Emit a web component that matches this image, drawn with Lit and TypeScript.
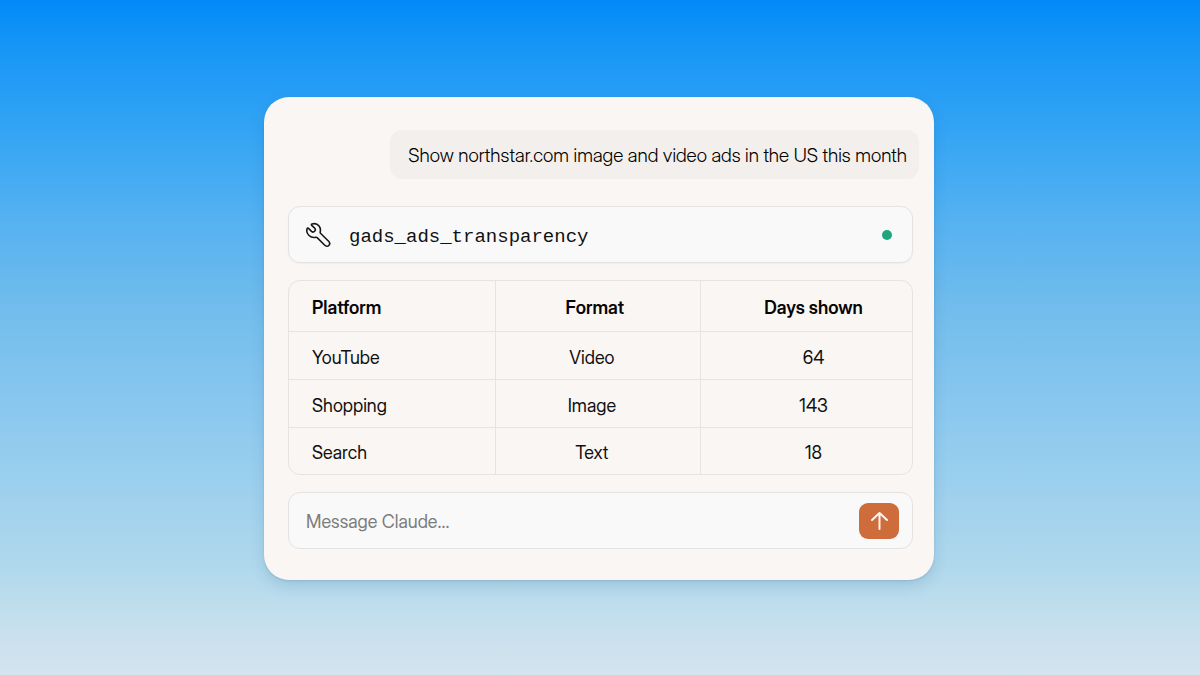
import { LitElement, html, css } from "lit";
import { customElement, state } from "lit/decorators.js";

interface AdRow {
  platform: string;
  format: string;
  days: number;
}

@customElement("app-root")
export class AppRoot extends LitElement {
  static styles = css`
    :host {
      display: grid;
      box-sizing: border-box;
      min-height: 100vh;
      place-items: center;
      padding: 26px 26px 24px 24px;
      font-family: "Inter Display", Inter, "Liberation Sans", sans-serif;
      font-size: 18px;
      line-height: 24px;
      color: #111;
      background: linear-gradient(
        #018af8 0%,
        #1796f6 7%,
        #35a5f4 20%,
        #56b2f1 33%,
        #70bcec 45%,
        #86c6ee 58%,
        #9bcfee 71%,
        #b0d8ec 84%,
        #c9e1ed 94%,
        #d3e4ee 100%
      );
    }
    * {
      box-sizing: border-box;
    }
    .card {
      display: flex;
      flex-direction: column;
      width: 100%;
      max-width: 670px;
      padding: 33px 15px 31px 24px;
      border-radius: 25px;
      background: #faf6f3;
      box-shadow: 0 6px 14px rgba(40, 90, 130, 0.16), 0 1px 2px rgba(40, 90, 130, 0.16);
    }
    .message {
      align-self: flex-end;
      margin: 0 0 27px;
      padding: 14px 12px 11px 18px;
      border-radius: 12px;
      background: #f3efec;
      font-size: 19px;
      font-weight: 300;
      color: #000;
    }
    .stack {
      display: flex;
      flex-direction: column;
      gap: 17px;
      margin-right: 6px;
    }
    .tool,
    .composer {
      display: flex;
      align-items: center;
      min-height: 57px;
      border: 1px solid #e3e3e3;
      border-radius: 12px;
      background: #f9f9f9;
    }
    .tool {
      gap: 18px;
      padding: 0 20px 0 16px;
      box-shadow: 0 1px 2px rgba(0, 0, 0, 0.04);
    }
    .wrench {
      width: 26px;
      height: 26px;
    }
    .name {
      flex: 1;
      padding-top: 4px;
      font-family: "Liberation Mono", monospace;
      font-size: 19px;
    }
    .dot {
      width: 10px;
      height: 10px;
      border-radius: 50%;
      background: #1fa67d;
    }
    .table {
      width: 100%;
      table-layout: fixed;
      border: 1px solid #e6e3e1;
      border-radius: 12px;
      border-collapse: separate;
      border-spacing: 0;
    }
    .table th,
    .table td {
      width: 33%;
      padding: 14px 12px 9px 0;
      text-align: center;
      font-weight: 400;
    }
    .table thead th {
      padding-top: 15px;
      padding-right: 6px;
      padding-bottom: 11px;
      font-weight: 600;
      color: #050505;
    }
    .table tbody tr:last-child td {
      padding-top: 13px;
    }
    .table .platform {
      padding-left: 23px;
      text-align: left;
    }
    .table thead .days,
    .table .days {
      width: 34%;
      padding-right: 0;
      padding-left: 14px;
    }
    .table tr > * + * {
      border-left: 1px solid #e6e3e1;
    }
    .table tbody tr > * {
      border-top: 1px solid #e6e3e1;
    }
    .composer {
      gap: 12px;
      padding: 0 13px 0 17px;
    }
    .input {
      flex: 1;
      min-width: 0;
      padding: 2px 0 0;
      border: 0;
      outline: 0;
      background: none;
      color: inherit;
      font: inherit;
    }
    .input::placeholder {
      color: #7d7d7d;
      opacity: 1;
    }
    .send {
      display: grid;
      place-items: center;
      width: 40px;
      height: 36px;
      padding: 0;
      border: 0;
      border-radius: 9px;
      background: #cf6c3c;
      cursor: pointer;
    }
    .arrow {
      width: 20px;
      height: 20px;
    }
  `;

  @state() private rows: AdRow[] = [
    { platform: "YouTube", format: "Video", days: 64 },
    { platform: "Shopping", format: "Image", days: 143 },
    { platform: "Search", format: "Text", days: 18 },
  ];

  render() {
    return html`
      <main class="card">
        <p class="message">Show northstar.com image and video ads in the US this month</p>
        <div class="stack">
          <div class="tool">
            <svg class="wrench" viewBox="0 0 26 26" fill="none" stroke="#181818" stroke-width="1.6" stroke-linejoin="round" stroke-linecap="round" aria-hidden="true">
              <path d="M7 2C9.5 1.2 12.4 1.9 14.1 4C15.5 5.8 15.7 7.8 15.2 10.2C15.1 10.7 15.2 11 15.5 11.3L23.6 19.3C24.9 20.6 24.9 22.4 23.8 23.5C22.7 24.6 21 24.5 19.8 23.3L12.1 15.6C11.8 15.3 11.5 15.2 11 15.3C8.5 15.9 5.9 15.3 4 13.5C2 11.6 1.3 9 2.1 6.7C2.4 6 3 5.9 3.5 6.4L6.5 9.3C7.6 10.3 8.8 10.1 9.6 9.3C10.5 8.4 10.6 7.2 9.7 6.2L6.7 3.4C6.2 2.9 6.3 2.3 7 2Z" />
            </svg>
            <span class="name">gads_ads_transparency</span>
            <span class="dot"></span>
          </div>
          <table class="table">
            <thead>
              <tr>
                <th class="platform" scope="col">Platform</th>
                <th scope="col">Format</th>
                <th class="days" scope="col">Days shown</th>
              </tr>
            </thead>
            <tbody>
              ${this.rows.map(
                (row) => html`
                  <tr>
                    <td class="platform">${row.platform}</td>
                    <td>${row.format}</td>
                    <td class="days">${row.days}</td>
                  </tr>
                `
              )}
            </tbody>
          </table>
          <form class="composer" @submit=${(e: Event) => e.preventDefault()}>
            <input class="input" type="text" placeholder="Message Claude..." aria-label="Message Claude" />
            <button class="send" type="submit" aria-label="Send">
              <svg class="arrow" viewBox="0 0 20 20" fill="none" stroke="#fff6ec" stroke-width="2" stroke-linecap="round" stroke-linejoin="round" aria-hidden="true">
                <path d="M10.5 18V2M3 9L10.5 2L18 9" />
              </svg>
            </button>
          </form>
        </div>
      </main>
    `;
  }
}
